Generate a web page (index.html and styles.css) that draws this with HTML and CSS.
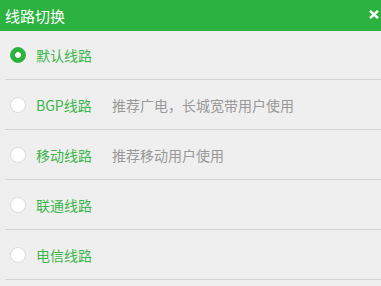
FILE: index.html
```html
<!DOCTYPE html>
<html lang="zh-CN">
<head>
	<meta charset="UTF-8">
	<title>线路切换</title>
	<link rel="stylesheet" href="styles.css">
</head>
<body>
<div class="dialog">
	<div class="head">
		<span class="title">线路切换</span>
		<svg class="close" width="10" height="9" viewBox="0 0 10 9">
			<path d="M1 0.8L9 8.2M9 0.8L1 8.2" stroke="#fff" stroke-width="2.4" fill="none"/>
		</svg>
	</div>
	<ul class="lines">
		<li class="on"><span class="radio"></span><span class="name">默认线路</span></li>
		<li><span class="radio"></span><span class="name">BGP线路</span><span class="desc">推荐广电，长城宽带用户使用</span></li>
		<li><span class="radio"></span><span class="name">移动线路</span><span class="desc">推荐移动用户使用</span></li>
		<li><span class="radio"></span><span class="name">联通线路</span></li>
		<li><span class="radio"></span><span class="name">电信线路</span></li>
	</ul>
</div>
</body>
</html>
```
FILE: styles.css
```css
html, body{
	margin: 0;
	padding: 0;
	background: #efefef;
	font-family: "Noto Sans CJK SC", "Noto Sans", sans-serif;
}
.head{
	height: 31px;
	background: #2cb33f;
	display: flex;
	justify-content: space-between;
	padding: 0 2px 0 5px;
}
.title{
	color: #fff;
	font-size: 15px;
	line-height: 31px;
}
.close{
	margin-top: 10px;
}
.lines{
	list-style: none;
	margin: -1px 0 0 0;
	padding: 0 0 0 5px;
}
.lines li{
	height: 49px;
	border-bottom: 1px solid #d4d4d4;
	display: flex;
	align-items: center;
}
.radio{
	width: 14px;
	height: 14px;
	border: 1px solid #dcdcdc;
	border-radius: 50%;
	background: #fff;
	margin: 0 10px 0 5px;
	box-sizing: content-box;
}
.on .radio{
	border: 1px solid #2cb33f;
	background: radial-gradient(circle, #fff 0 2.6px, #2cb33f 3.2px);
}
.name{
	color: #3cb64a;
	font-size: 14px;
	min-width: 76px;
}
.desc{
	color: #999;
	font-size: 14px;
}
```
